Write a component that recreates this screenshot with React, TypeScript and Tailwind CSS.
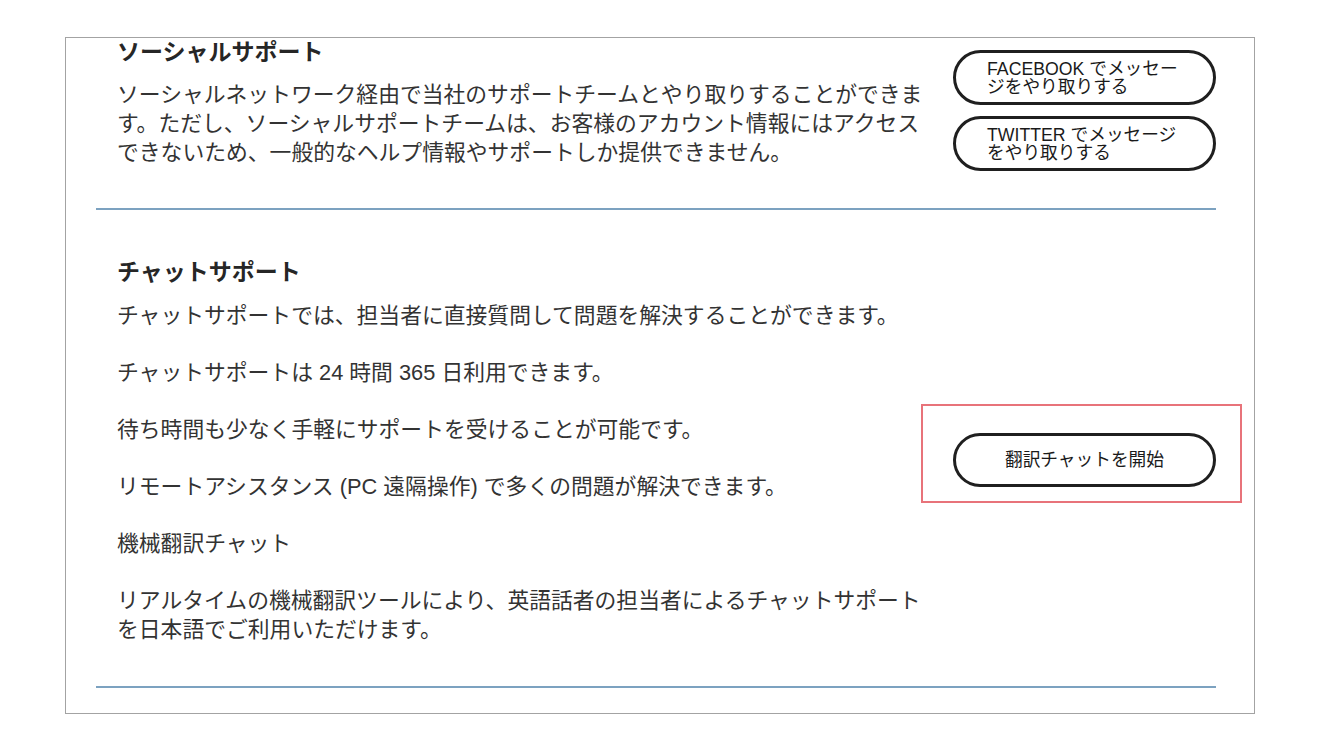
import React from "react";

const font = {
  fontFamily: '"Liberation Sans", "Noto Sans CJK JP", sans-serif',
};

const PillButton: React.FC<{ className?: string; children: React.ReactNode }> = ({
  className,
  children,
}) => (
  <div
    className={
      "flex items-center rounded-full border-[3px] border-[#1f1f1f] text-[17.7px] leading-[18px] text-[#1a1a1a] " +
      (className ?? "")
    }
  >
    {children}
  </div>
);

const App: React.FC = () => {
  return (
    <div className="min-h-[750px] w-[1320px] bg-white" style={font}>
      <div className="pt-[37px] pl-[65px]">
        <div className="h-[677px] w-[1190px] overflow-hidden border border-[#a3a3a3] pl-[30px] pr-[38px]">
          {/* social support */}
          <div className="flex pl-[21px] pb-[37px]">
            <div className="w-[836px]">
              <h2 className="text-[23px] font-bold leading-[29px] text-[#262626]">
                ソーシャルサポート
              </h2>
              <p className="mt-[13px] text-[21.8px] leading-[29px] text-[#333]">
                ソーシャルネットワーク経由で当社のサポートチームとやり取りすることができま
                <br />
                す。ただし、ソーシャルサポートチームは、お客様のアカウント情報にはアクセス
                <br />
                できないため、一般的なヘルプ情報やサポートしか提供できません。
              </p>
            </div>
            <div className="flex w-[263px] flex-col gap-[11px] pt-[12px]">
              <PillButton className="h-[55px] pl-[31px]">
                <span>
                  FACEBOOK でメッセー
                  <br />
                  ジをやり取りする
                </span>
              </PillButton>
              <PillButton className="h-[55px] pl-[31px]">
                <span>
                  TWITTER でメッセージ
                  <br />
                  をやり取りする
                </span>
              </PillButton>
            </div>
          </div>
          <div className="h-[2px] bg-[#7ca2c0]" />

          {/* chat support */}
          <div className="flex pl-[21px] pt-[48px] pb-[42px]">
            <div className="w-[836px]">
              <h2 className="text-[23px] font-bold leading-[29px] text-[#262626]">
                チャットサポート
              </h2>
              <div className="mt-[14px] flex flex-col gap-[28px] text-[21.8px] leading-[29px] text-[#333]">
                <p>チャットサポートでは、担当者に直接質問して問題を解決することができます。</p>
                <p>チャットサポートは 24 時間 365 日利用できます。</p>
                <p>待ち時間も少なく手軽にサポートを受けることが可能です。</p>
                <p>リモートアシスタンス (PC 遠隔操作) で多くの問題が解決できます。</p>
                <p>機械翻訳チャット</p>
                <p>
                  リアルタイムの機械翻訳ツールにより、英語話者の担当者によるチャットサポート
                  <br />
                  を日本語でご利用いただけます。
                </p>
              </div>
            </div>
            <div className="w-[263px] pt-[175px]">
              <div className="relative">
                <div className="pointer-events-none absolute -left-[32px] -top-[29px] -right-[26px] -bottom-[16px] border-2 border-[#e8737a]" />
                <PillButton className="h-[54px] justify-center">
                  <span>翻訳チャットを開始</span>
                </PillButton>
              </div>
            </div>
          </div>
          <div className="h-[2px] bg-[#7ca2c0]" />
        </div>
      </div>
    </div>
  );
};

export default App;
